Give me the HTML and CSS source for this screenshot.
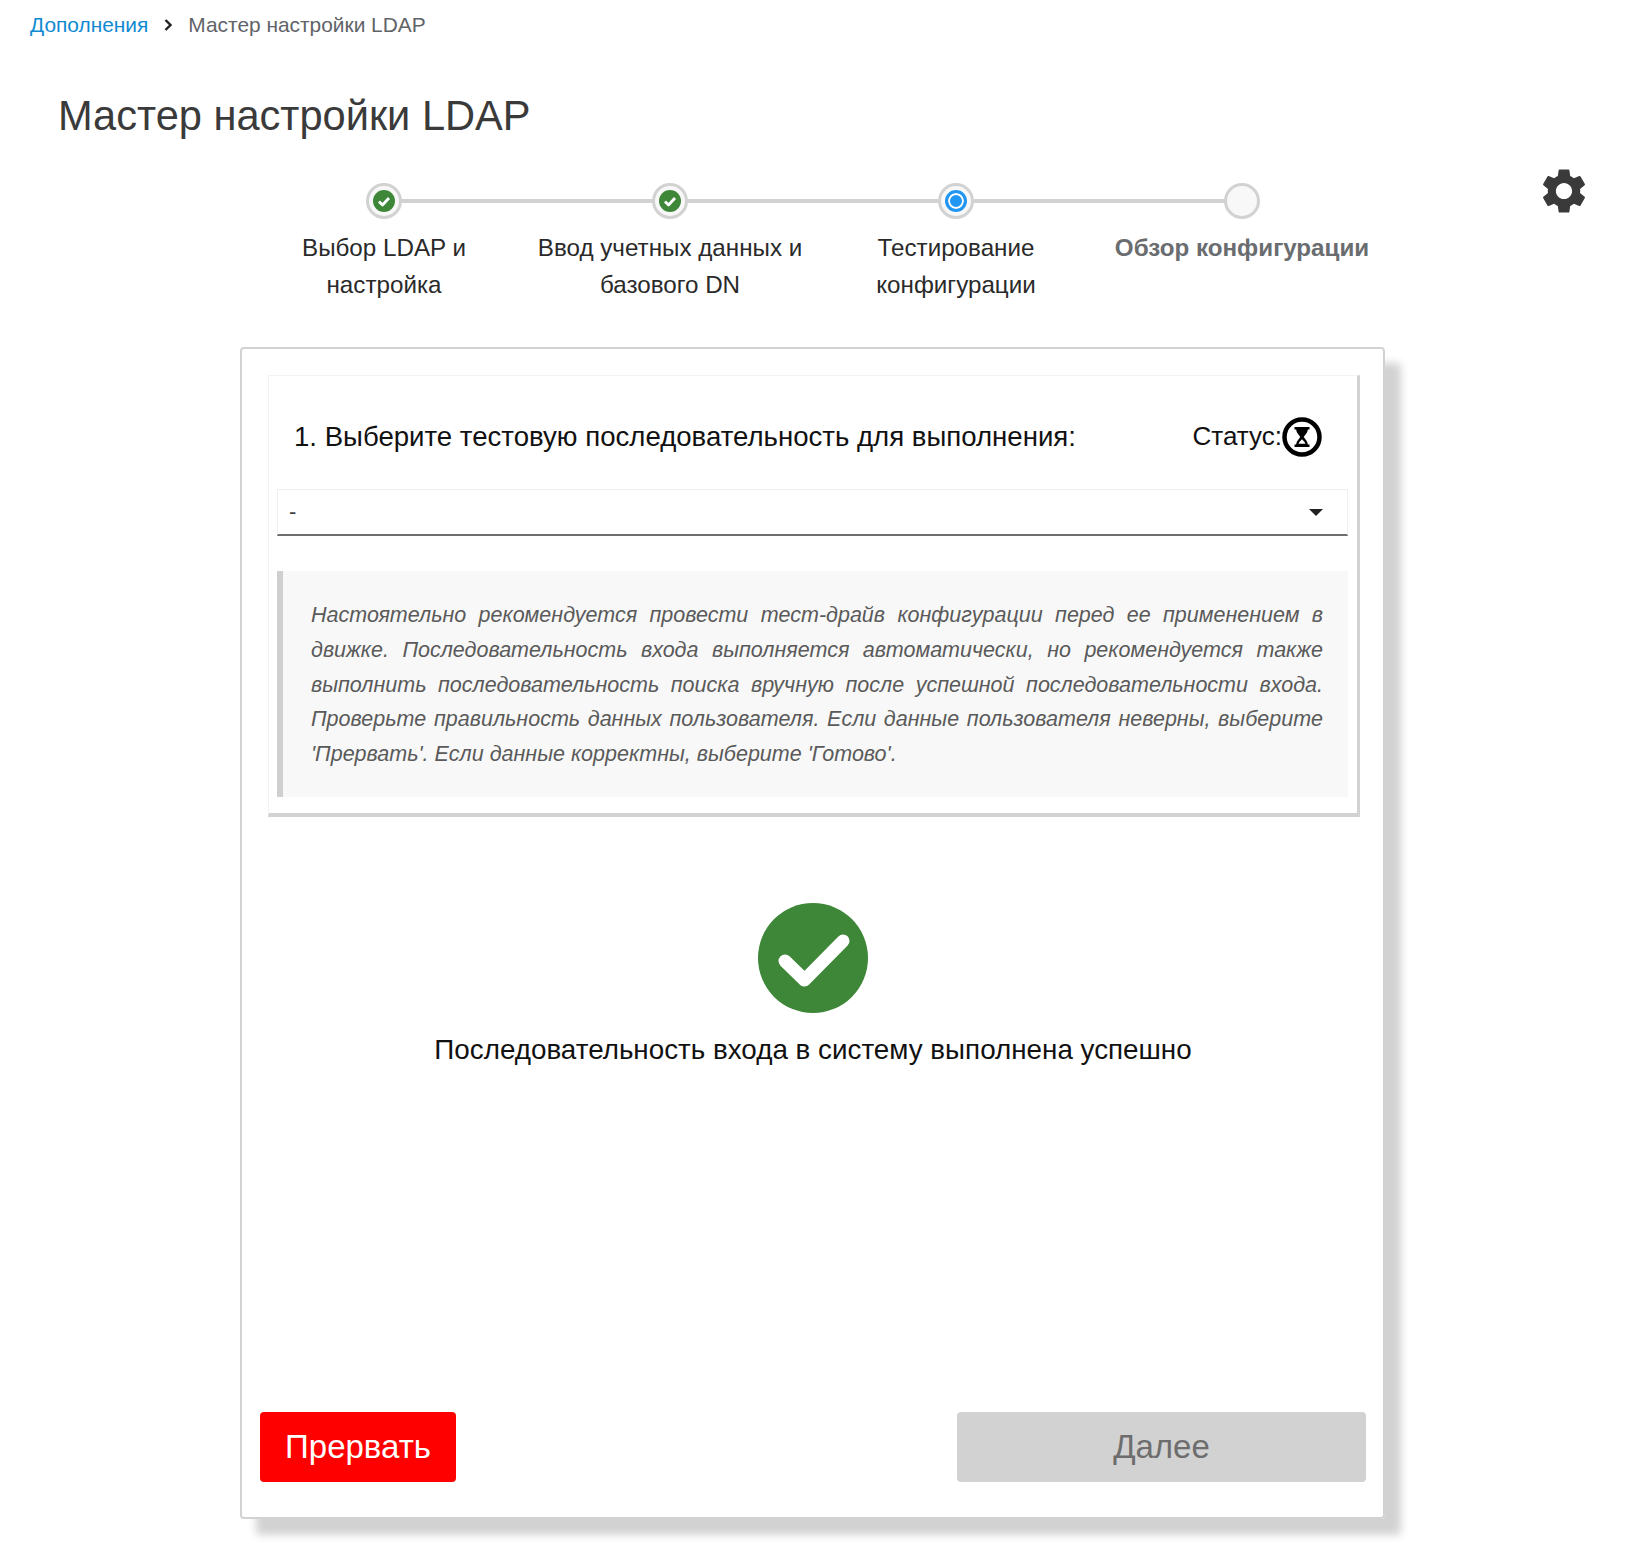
FILE: index.html
```html
<!DOCTYPE html>
<html lang="ru">
<head>
    <meta charset="UTF-8">
    <title>Мастер настройки LDAP</title>
    <link rel="stylesheet" href="styles.css">
</head>
<body>
    <nav class="breadcrumb">
        <a href="#" class="breadcrumb-link">Дополнения</a>
        <svg class="breadcrumb-sep" viewBox="0 0 10 14"><path d="M2.5 2l5 5-5 5" fill="none" stroke="#222" stroke-width="2.4"/></svg>
        <span>Мастер настройки LDAP</span>
    </nav>

    <h1 class="page-title">Мастер настройки LDAP</h1>

    <svg class="settings" viewBox="0 0 24 24"><path fill="#3a3a3a" d="M19.14 12.94c.04-.3.06-.61.06-.94 0-.32-.02-.64-.07-.94l2.03-1.58c.18-.14.23-.41.12-.61l-1.92-3.32c-.12-.22-.37-.29-.59-.22l-2.39.96c-.5-.38-1.03-.7-1.62-.94l-.36-2.54c-.04-.24-.24-.41-.48-.41h-3.84c-.24 0-.43.17-.47.41l-.36 2.54c-.59.24-1.13.57-1.62.94l-2.39-.96c-.22-.08-.47 0-.59.22L2.74 8.87c-.12.21-.08.47.12.61l2.03 1.58c-.05.3-.09.63-.09.94s.02.64.07.94l-2.03 1.58c-.18.14-.23.41-.12.61l1.92 3.32c.12.22.37.29.59.22l2.39-.96c.5.38 1.03.7 1.62.94l.36 2.54c.05.24.24.41.48.41h3.84c.24 0 .44-.17.47-.41l.36-2.54c.59-.24 1.13-.56 1.62-.94l2.39.96c.22.08.47 0 .59-.22l1.92-3.32c.12-.22.07-.47-.12-.61l-2.01-1.58zM12 15.6c-1.98 0-3.6-1.62-3.6-3.6s1.62-3.6 3.6-3.6 3.6 1.62 3.6 3.6-1.62 3.6-3.6 3.6z"/></svg>

    <ol class="stepper">
        <li class="step">
            <span class="step-dot"><svg class="step-check" viewBox="0 0 22 22"><circle cx="11" cy="11" r="11" fill="#3f8738"/><path d="M6 11.5l3.5 3.5 6.5-7" fill="none" stroke="#fff" stroke-width="2.8" stroke-linejoin="round"/></svg></span>
            <span class="step-label">Выбор LDAP и настройка</span>
        </li>
        <li class="step">
            <span class="step-dot"><svg class="step-check" viewBox="0 0 22 22"><circle cx="11" cy="11" r="11" fill="#3f8738"/><path d="M6 11.5l3.5 3.5 6.5-7" fill="none" stroke="#fff" stroke-width="2.8" stroke-linejoin="round"/></svg></span>
            <span class="step-label">Ввод учетных данных и базового DN</span>
        </li>
        <li class="step">
            <span class="step-dot"><span class="step-current"></span></span>
            <span class="step-label">Тестирование конфигурации</span>
        </li>
        <li class="step step-todo">
            <span class="step-dot"></span>
            <span class="step-label">Обзор конфигурации</span>
        </li>
    </ol>

    <main class="card">
        <section class="panel">
            <div class="panel-head">
                <h2 class="panel-title">1. Выберите тестовую последовательность для выполнения:</h2>
                <div class="status">
                    <span>Статус:</span>
                    <svg class="status-icon" viewBox="0 0 40 40">
                        <circle cx="20" cy="20" r="17.5" fill="#fff" stroke="#000" stroke-width="4.5"/>
                        <path d="M12.5 10h15v2.5h-1.6c-.4 3-2.500 5.300-4.200 7.500 1.700 2.200 3.800 4.500 4.200 7.500h1.600V30h-15v-2.500h1.600c.4-3 2.500-5.300 4.200-7.500-1.700-2.200-3.800-4.500-4.200-7.500h-1.600z" fill="#000"/>
                        <path d="M16.500 26.800c.5-1.500 1.900-3 3.500-4.500 1.600 1.500 3 3 3.500 4.500z" fill="#fff"/>
                    </svg>
                </div>
            </div>
            <div class="select">
                <span>-</span>
                <span class="select-arrow"></span>
            </div>
            <p class="note">Настоятельно рекомендуется провести тест-драйв конфигурации перед ее применением в движке. Последовательность входа выполняется автоматически, но рекомендуется также выполнить последовательность поиска вручную после успешной последовательности входа. Проверьте правильность данных пользователя. Если данные пользователя неверны, выберите 'Прервать'. Если данные корректны, выберите 'Готово'.</p>
        </section>

        <div class="result">
            <svg class="result-icon" viewBox="0 0 110 110">
                <circle cx="55" cy="55" r="55" fill="#3f8738"/>
                <path d="M27 58l19.500 19 38.500-39" fill="none" stroke="#fff" stroke-width="13" stroke-linejoin="round" stroke-linecap="round"/>
            </svg>
            <p class="result-text">Последовательность входа в систему выполнена успешно</p>
        </div>

        <div class="actions">
            <button class="button button-abort">Прервать</button>
            <button class="button button-next" disabled>Далее</button>
        </div>
    </main>
</body>
</html>
```

FILE: styles.css
```css
* {
    box-sizing: border-box;
}

body {
    margin: 0;
    padding: 0 0 36px;
    position: relative;
    background: #fff;
    font-family: 'Liberation Sans', Arial, sans-serif;
    color: #222;
}

.breadcrumb {
    display: flex;
    align-items: center;
    height: 50px;
    padding-left: 30px;
    font-size: 20.900px;
    color: #5f6368;
}

.breadcrumb-link {
    color: #0f8ad2;
    text-decoration: none;
}

.breadcrumb-sep {
    width: 10px;
    height: 14px;
    margin: 0 15px 0 15px;
}

.page-title {
    margin: 42px 0 0 58px;
    font-size: 41.600px;
    line-height: 48px;
    font-weight: 400;
    color: #3a3a3a;
}

.settings {
    position: absolute;
    left: 1537px;
    top: 164px;
    width: 54px;
    height: 54px;
}

/* stepper */
.stepper {
    display: grid;
    grid-template-columns: repeat(4, 286px);
    justify-content: center;
    margin: 43px 0 0;
    padding: 0 1px 0 0;
    list-style: none;
}

.step {
    position: relative;
    display: flex;
    flex-direction: column;
    align-items: center;
    text-align: center;
}

.step:not(:last-child)::after {
    content: "";
    position: absolute;
    left: 50%;
    top: 16px;
    width: 100%;
    height: 4px;
    background: #d2d2d2;
}

.step-dot {
    position: relative;
    z-index: 1;
    display: flex;
    align-items: center;
    justify-content: center;
    width: 36px;
    height: 36px;
    border: 3px solid #d2d2d2;
    border-radius: 50%;
    background: #f8f8f8;
}

.step-check {
    width: 22px;
    height: 22px;
}

.step-current {
    width: 22px;
    height: 22px;
    border: 3px solid #2196f3;
    border-radius: 50%;
    background: #2196f3;
    box-shadow: inset 0 0 0 2px #fff;
}

.step-label {
    width: 280px;
    margin-top: 10px;
    font-size: 24.200px;
    line-height: 37px;
    color: #2a2a2a;
}

.step-todo .step-label {
    font-weight: 700;
    color: #6a6d70;
}

/* card */
.card {
    display: flex;
    flex-direction: column;
    width: 1145px;
    height: 1172px;
    margin: 44px 0 0 240px;
    padding: 26px 17px 35px 18px;
    border: 2px solid #d2d2d2;
    border-radius: 4px;
    box-shadow: 16px 16px 8px #d2d2d2;
}

.panel {
    width: 1092px;
    margin-left: 8px;
    padding: 0 9px 16px 8px;
    border-top: 1px solid #f2f2f2;
    border-left: 1px solid #f2f2f2;
    border-right: 3px solid #d2d2d2;
    border-bottom: 4px solid #d2d2d2;
}

.panel-head {
    display: flex;
    align-items: center;
    justify-content: space-between;
    height: 113px;
    padding: 8px 26px 0 17px;
}

.panel-title {
    margin: 0;
    font-size: 27.600px;
    font-weight: 400;
    color: #111;
}

.status {
    display: flex;
    align-items: center;
    font-size: 26px;
    color: #111;
}

.status-icon {
    width: 40px;
    height: 40px;
}

.select {
    display: flex;
    align-items: center;
    justify-content: space-between;
    height: 47px;
    padding: 0 24px 0 11px;
    border: 1px solid #f0f0f0;
    border-bottom: 2px solid #6f6f6f;
    font-size: 22px;
    color: #444;
}

.select-arrow {
    width: 0;
    height: 0;
    border-left: 7px solid transparent;
    border-right: 7px solid transparent;
    border-top: 7px solid #222;
}

.note {
    margin: 35px 0 0;
    padding: 27px 25px 25px 28px;
    border-left: 6px solid #cfcfcf;
    background: #f8f8f8;
    font-size: 21.500px;
    line-height: 34.800px;
    font-style: italic;
    text-align: justify;
    color: #5a5a5a;
}

/* result */
.result {
    display: flex;
    flex-direction: column;
    align-items: center;
    margin-top: 86px;
}

.result-icon {
    width: 110px;
    height: 110px;
}

.result-text {
    margin: 19px 0 0;
    font-size: 27.800px;
    line-height: 36px;
    color: #111;
}

/* buttons */
.actions {
    display: flex;
    justify-content: space-between;
    margin-top: auto;
}

.button {
    height: 70px;
    border: none;
    border-radius: 4px;
    font-family: inherit;
    font-size: 33px;
}

.button-abort {
    width: 196px;
    background: #ff0000;
    color: #fff;
}

.button-next {
    width: 409px;
    background: #d2d2d2;
    color: #6d6d6d;
}
```
